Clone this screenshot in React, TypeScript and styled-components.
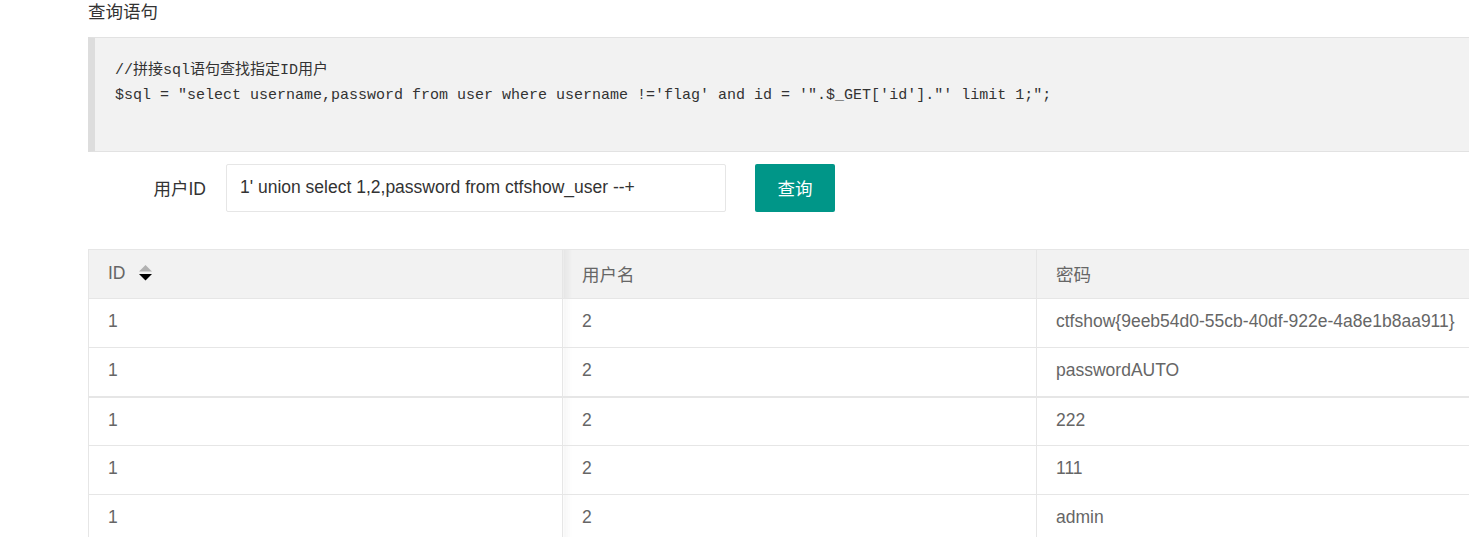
import React from "react";
import styled, { createGlobalStyle } from "styled-components";

const Global = createGlobalStyle`
  html, body { margin: 0; padding: 0; background: #fff; overflow: hidden; }
  body { font-family: "Liberation Sans", Arial, "Noto Sans CJK SC", sans-serif; color: #333; }
`;

const Page = styled.div`
  width: 1423px;
  padding-left: 88px;
`;

const Title = styled.div`
  font-size: 17.5px;
  line-height: 24px;
  color: #333;
`;

const Code = styled.pre`
  margin: 13px 0 12px;
  padding: 20px 20px 43px;
  border-top: 1px solid #e2e2e2;
  border-bottom: 1px solid #e2e2e2;
  border-left: 7px solid #ddd;
  background: #f2f2f2;
  color: #333;
  font-family: "Liberation Mono", "Courier New", "Noto Sans CJK SC", monospace;
  font-size: 15px;
  line-height: 25px;
  white-space: pre;
`;

const FormRow = styled.div`
  display: flex;
  align-items: center;
  height: 48px;
`;

const Label = styled.label`
  width: 118px;
  text-align: right;
  font-size: 17.5px;
  color: #333;
  margin-right: 20px;
  padding-bottom: 1px;
`;

const Input = styled.input`
  box-sizing: border-box;
  width: 500px;
  height: 48px;
  padding: 0 13px 2px;
  border: 1px solid #e6e6e6;
  border-radius: 2px;
  font-family: "Liberation Sans", Arial, sans-serif;
  font-size: 17.5px;
  color: #333;
  outline: none;
`;

const Button = styled.button`
  box-sizing: border-box;
  margin-left: 29px;
  width: 80px;
  height: 48px;
  padding: 0 0 1px;
  border: none;
  border-radius: 2px;
  background: #009688;
  color: #fff;
  font-family: "Noto Sans CJK SC", sans-serif;
  font-size: 17.5px;
  cursor: pointer;
`;

const Table = styled.table`
  margin-top: 37px;
  width: 1423px;
  table-layout: fixed;
  border-collapse: collapse;
  font-size: 17.5px;
  color: #666;
`;

const Th = styled.th<{ $shade?: boolean }>`
  height: 46px;
  padding: 0 19px 2px;
  text-align: left;
  font-weight: normal;
  background: ${(p) =>
    p.$shade
      ? "linear-gradient(to right, rgba(0,0,0,0.05), rgba(0,0,0,0) 9px), #f2f2f2"
      : "#f2f2f2"};
  border: 1px solid #e6e6e6;
  white-space: nowrap;
`;

const Td = styled.td<{ $shade?: boolean; $thick?: boolean }>`
  height: ${(p) => (p.$thick ? "45.25px" : "45.75px")};
  padding: 0 19px 2px;
  border: 1px solid #e6e6e6;
  border-top-width: ${(p) => (p.$thick ? "2px" : "1px")};
  background: ${(p) =>
    p.$shade
      ? "linear-gradient(to right, rgba(0,0,0,0.035), rgba(0,0,0,0) 8px), #fff"
      : "#fff"};
  white-space: nowrap;
`;

const HeadInner = styled.span`
  display: inline-flex;
  align-items: center;
  gap: 13px;
`;

const SortIcon = () => (
  <svg width="13" height="16" viewBox="0 0 13 16">
    <polygon points="0,6.5 6.5,0 13,6.5" fill="#b2b2b2" />
    <polygon points="0,9 13,9 6.5,15.5" fill="#000" />
  </svg>
);

const rows = [
  ["1", "2", "ctfshow{9eeb54d0-55cb-40df-922e-4a8e1b8aa911}"],
  ["1", "2", "passwordAUTO"],
  ["1", "2", "222"],
  ["1", "2", "111"],
  ["1", "2", "admin"],
];

export default function App() {
  return (
    <Page>
      <Global />
      <Title>查询语句</Title>
      <Code>
        {"//拼接sql语句查找指定ID用户\n$sql = \"select username,password from user where username !='flag' and id = '\".$_GET['id'].\"' limit 1;\";"}
      </Code>
      <FormRow>
        <Label>用户ID</Label>
        <Input defaultValue="1' union select 1,2,password from ctfshow_user --+" />
        <Button>查询</Button>
      </FormRow>
      <Table>
        <thead>
          <tr>
            <Th>
              <HeadInner>
                ID
                <SortIcon />
              </HeadInner>
            </Th>
            <Th $shade>用户名</Th>
            <Th>密码</Th>
          </tr>
        </thead>
        <tbody>
          {rows.map((r, i) => (
            <tr key={i}>
              <Td $thick={i === 2}>{r[0]}</Td>
              <Td $shade $thick={i === 2}>{r[1]}</Td>
              <Td $thick={i === 2}>{r[2]}</Td>
            </tr>
          ))}
        </tbody>
      </Table>
    </Page>
  );
}
